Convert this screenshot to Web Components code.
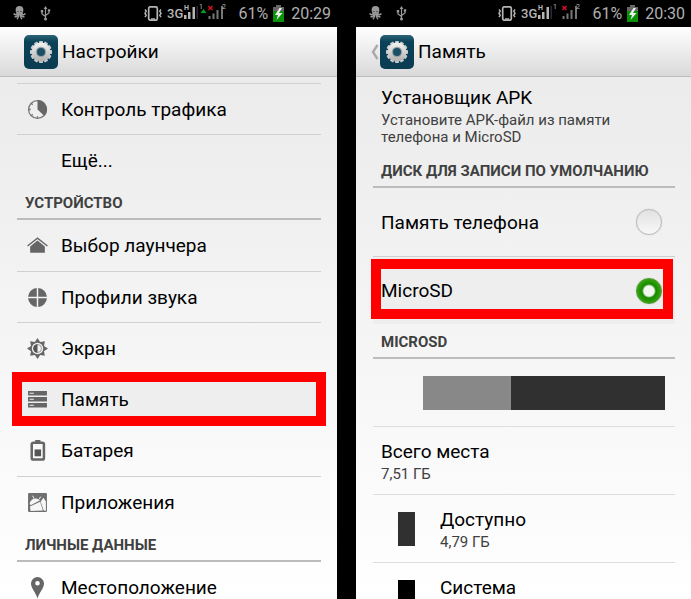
<!DOCTYPE html>
<html lang="ru">
<head>
<meta charset="utf-8">
<meta name="viewport" content="width=device-width, initial-scale=1">
<title>Настройки</title>
<style>
    body {
        margin: 0;
        height: 100vh;
        overflow: hidden;
        background: #000;
        color: #000;
        font-family: Roboto, "Noto Sans", sans-serif;
        font-size: 19px;
        display: grid;
        grid-template-columns: 337fr 335fr;
        grid-template-rows: 100%;
        gap: 19px;
    }
</style>
</head>
<body>
    <phone-screen>
        <status-bar slot="status" time="20:29" charge="61%" upload></status-bar>
        <title-bar slot="title" label="Настройки"></title-bar>
        <menu-item icon="traffic" label="Контроль трафика" divided></menu-item>
        <menu-item label="Ещё..." divided></menu-item>
        <section-title>Устройство</section-title>
        <menu-item icon="home" label="Выбор лаунчера"></menu-item>
        <menu-item icon="sound" label="Профили звука" divided></menu-item>
        <menu-item icon="display" label="Экран" divided></menu-item>
        <menu-item icon="storage" label="Память" marked></menu-item>
        <menu-item icon="battery" label="Батарея"></menu-item>
        <menu-item icon="apps" label="Приложения" divided></menu-item>
        <section-title>Личные данные</section-title>
        <menu-item icon="place" label="Местоположение"></menu-item>
    </phone-screen>

    <phone-screen>
        <status-bar slot="status" time="20:30" charge="61%"></status-bar>
        <title-bar slot="title" label="Память" back></title-bar>
        <info-row label="Установщик APK" compact>Установите APK-файл из памяти телефона и MicroSD</info-row>
        <section-title>Диск для записи по умолчанию</section-title>
        <disk-picker></disk-picker>
        <section-title>MicroSD</section-title>
        <usage-bar></usage-bar>
        <info-row label="Всего места">7,51 ГБ</info-row>
        <info-row label="Доступно" swatch="#303030">4,79 ГБ</info-row>
        <info-row label="Система" swatch="#000"></info-row>
    </phone-screen>

<script>
const ICONS = {
    traffic: `
        <circle cx="10" cy="10" r="8.5" fill="#eee" stroke="#777" stroke-width="1.2"/>
        <path d="M10 1a9 9 0 0 1 6.6 15.1L10 10z" fill="#666"/>
        <path d="M1.5 10h2M10 16.5v2M4 4l1.4 1.4M4 16l1.4-1.4" stroke="#777" stroke-width="1.3"/>`,
    home: `
        <path d="M.5 10.5 10 3l9.500 7.500" fill="none" stroke="#666" stroke-width="1.3"/>
        <path d="M10 5.200 17 11v5.800H3V11z" fill="#666"/>`,
    sound: `
        <path d="M9.300 1v8.300H1A9 9 0 0 1 9.300 1zM10.700 1A9 9 0 0 1 19 9.300h-8.300zM1 10.700h8.300V19A9 9 0 0 1 1 10.700zM10.700 10.700H19A9 9 0 0 1 10.700 19z" fill="#666"/>`,
    display: `
        <path d="M10 0 12.500 3.800 17 3l-.8 4.500L20 10l-3.800 2.500L17 17l-4.500-.8L10 20l-2.500-3.800L3 17l.8-4.500L0 10l3.800-2.500L3 3l4.500.8z" fill="#666"/>
        <circle cx="10" cy="10" r="5.400" fill="#f2f2f2"/>
        <circle cx="10" cy="10" r="3.800" fill="none" stroke="#888" stroke-width=".8"/>
        <path d="M10 6a4 4 0 0 0 0 8z" fill="#555"/>`,
    storage: `
        <path d="M1 2h18v4.200H1zM1 7.700h18v4.200H1zM1 13.400h18v4.200H1z" fill="#666"/>
        <path d="M2.500 3.600h4v1h-4zM2.500 9.300h4v1h-4zM2.500 15h4v1h-4z" fill="#eee"/>`,
    battery: `
        <path d="M7.800 0h5v2.500h-5z" fill="#666"/>
        <rect x="4.500" y="2.600" width="11.600" height="16" rx="1.500" fill="none" stroke="#666" stroke-width="2.400"/>
        <path d="M7.200 9h6.200v6.500H7.200z" fill="#555"/>`,
    apps: `
        <rect x="1" y="1" width="18" height="18" rx="1" fill="#707070"/>
        <path d="M2.500 11C4 6.500 8 4.800 12.500 7.800L3.500 12.500zM6.300 6.200 5 3.800l.6-.4 1.500 2.500zM11.300 6.300l1.400-2 .6.4-1.300 2.200z" fill="#f6f6f6"/>
        <path d="M13 9.200 15.600 5.500 18 9v9l-2.200-.6zM2.800 13.800l9.700-4.600 2.600 8.300L3.400 18z" fill="#f6f6f6"/>`,
    place: `
        <path fill-rule="evenodd" d="M10 0a6.200 6.200 0 0 1 6.200 6.200C16.200 10.500 12 14 10 20.500 8 14 3.800 10.500 3.800 6.200A6.200 6.200 0 0 1 10 0zm0 3.800a2.200 2.200 0 1 0 0 4.400 2.200 2.200 0 0 0 0-4.400z" fill="#666"/>`
};

class PhoneScreen extends HTMLElement {
    constructor() {
        super();
        this.attachShadow({mode: 'open'});
    }

    connectedCallback() {
        this.shadowRoot.innerHTML = `
        <slot name="status"></slot>
        <slot name="title"></slot>
        <main><slot></slot></main>
        <style>
            :host {
                display: flex;
                flex-direction: column;
                min-width: 0;
                overflow: hidden;
                background: linear-gradient(#e9e9e9, #f0f0f0 35%, #fff);
            }
            main {
                flex: 1;
                min-height: 0;
                padding: 6px 16px 0 17px;
            }
        </style>
        `;
    }
}

class StatusBar extends HTMLElement {
    constructor() {
        super();
        this.attachShadow({mode: 'open'});
    }

    connectedCallback() {
        const upload = this.hasAttribute('upload') ? '<path d="m36.500 9 3 4h-6z" fill="#00a020"/>' : '';
        this.shadowRoot.innerHTML = `
        <div class="left">
            <svg width="13" height="14" viewBox="0 0 13 14">
                <circle cx="6.500" cy="4" r="3.900" fill="#999"/>
                <path d="M4.500 6.500C4 9 2 9.300.6 7.600M8.500 6.500C9 9 11 9.300 12.400 7.600M5 7.500C5 10 3.500 11 1.500 10.800M8 7.500c0 2.500 1.500 3.500 3.500 3.300M5.800 8c0 2.500-.5 4-1.800 5.200M7.200 8c0 2.500.5 4 1.800 5.200" fill="none" stroke="#999" stroke-width="1.500"/>
                <path d="M4.500 5h1v1h-1zM7.500 5h1v1h-1z" fill="#222"/>
            </svg>
            <svg width="11" height="15" viewBox="0 0 11 15">
                <path d="M5.500 2v11M5.500 10.500 2 8V5.500M5.500 9.500 9 7V4.500" fill="none" stroke="#999" stroke-width="1.200"/>
                <path d="m5.500 0 1.900 3H3.600zM.8 4h2.400v2.400H.8zM7.800 3.200h2.400v2.400H7.800z" fill="#999"/>
                <circle cx="5.500" cy="13" r="1.500" fill="#999"/>
            </svg>
        </div>
        <svg class="vibrate" width="18" height="15" viewBox="0 0 18 15" fill="none" stroke="#b5b5b5">
            <rect x="4.700" y=".8" width="8.600" height="13.400" rx="1.600" stroke-width="1.700"/>
            <path d="M7 13h4" stroke-width="1.500"/>
            <path d="m1 3.500 1.200 1.600L1 7.500l1.200 1.800L1 11.200M17 3.500l-1.200 1.600L17 7.500l-1.200 1.800 1.200 1.900" stroke-width="1.500"/>
        </svg>
        <svg class="signal" width="59" height="27" viewBox="0 0 59 27" fill="#b5b5b5">
            <text x="0" y="18" font-size="13" font-weight="500">3G</text>
            <text x="17" y="10" font-size="7" font-weight="700">H</text>
            <path d="M17 15h2.500v4H17zM21 12h2.500v7H21zM25.500 7h2.500v12h-2.500z"/>
            <path d="M29.500 6h1.500v13h-1.500z" fill="#302635"/>
            <text x="32" y="9" font-size="7">1</text>
            ${upload}
            <path d="m41.500 6 4 4m0-4-4 4" stroke="#e01020" stroke-width="1.400"/>
            <path d="M41.500 16h2v3h-2zM45.500 13.500h2V19h-2zM49.500 10h2v9h-2zM54 6h2v13h-2z" fill="#777"/>
            <text x="55" y="9" font-size="7">2</text>
        </svg>
        <span class="charge">${this.getAttribute('charge')}</span>
        <svg class="cell" width="11" height="17" viewBox="0 0 11 17">
            <path d="M3 0h5v2h3v15H0V2h3z" fill="#666"/>
            <path d="M0 6h11v11H0z" fill="#079207"/>
            <path d="M6.500 3 2 10h3l-1.500 5L9.500 8H6l3-5z" fill="#eee"/>
        </svg>
        <time>${this.getAttribute('time')}</time>
        <style>
            :host {
                display: flex;
                align-items: center;
                height: 27px;
                padding: 0 6px 0 13px;
                background: #000;
                color: #b0b0b0;
                font-size: 16px;
            }
            .left {
                display: flex;
                flex: 1;
                gap: 14px;
            }
            .vibrate { margin-right: 5px; }
            .signal { margin-right: 12px; }
            .cell { margin: 0 7px 0 5px; }
        </style>
        `;
    }
}

class TitleBar extends HTMLElement {
    constructor() {
        super();
        this.attachShadow({mode: 'open'});
    }

    connectedCallback() {
        const teeth = Array.from({length: 12}, (_, i) =>
            `<path d="M-1.700-11h3.400l.6 3h-4.600z" transform="rotate(${i * 30})"/>`).join('');
        const back = this.hasAttribute('back') ? `
            <button aria-label="Назад">
                <svg width="8" height="16" viewBox="0 0 8 16"><path d="M6.500 1 2 8l4.500 7" fill="none" stroke="#aaa" stroke-width="2.400"/></svg>
            </button>` : '';
        this.shadowRoot.innerHTML = `
        <div class="back">${back}</div>
        <svg class="logo" width="34" height="34" viewBox="0 0 34 34">
            <defs>
                <linearGradient id="tile" x2="0" y2="1"><stop stop-color="#2b6378"/><stop offset=".2" stop-color="#0b4259"/><stop offset="1" stop-color="#0a3c52"/></linearGradient>
                <linearGradient id="metal" x2="0" y2="1"><stop stop-color="#f4f4f4"/><stop offset="1" stop-color="#b0b0b0"/></linearGradient>
            </defs>
            <rect width="34" height="34" rx="5" fill="url(#tile)"/>
            <g transform="translate(17 17)" fill="#ccc">
                ${teeth}
                <circle r="9.400" fill="url(#metal)"/>
                <circle r="5.200" fill="#9aa2a6"/>
                <circle r="4" fill="#1a4f66"/>
            </g>
        </svg>
        <h1>${this.getAttribute('label')}</h1>
        <style>
            :host {
                display: flex;
                align-items: center;
                height: 49px;
                border-bottom: 1px solid #bdbdbd;
                background: linear-gradient(#fff, #d9d9d9);
            }
            .back {
                display: flex;
                justify-content: flex-end;
                width: 24px;
            }
            button {
                display: flex;
                padding: 0 1px 0 0;
                border: 0;
                background: none;
            }
            h1 {
                margin: 0 0 0 4px;
                font-size: 19px;
                font-weight: 400;
            }
        </style>
        `;
    }
}

class SectionTitle extends HTMLElement {
    constructor() {
        super();
        this.attachShadow({mode: 'open'});
    }

    connectedCallback() {
        this.shadowRoot.innerHTML = `
        <h2><slot></slot></h2>
        <style>
            :host { display: block; }
            h2 {
                box-sizing: border-box;
                height: 35px;
                margin: 0;
                padding: 9px 8px 0;
                border-bottom: 2px solid #bcbcbc;
                color: #404040;
                font-size: 15px;
                font-weight: 700;
                line-height: 18px;
                text-transform: uppercase;
                white-space: nowrap;
            }
        </style>
        `;
    }
}

class MenuItem extends HTMLElement {
    constructor() {
        super();
        this.attachShadow({mode: 'open'});
    }

    connectedCallback() {
        const icon = this.getAttribute('icon');
        this.shadowRoot.innerHTML = `
        <a href="#${icon || 'more'}">
            <svg width="21" height="21" viewBox="0 0 20 20" overflow="visible">${ICONS[icon] || ''}</svg>
            <span>${this.getAttribute('label')}</span>
        </a>
        <style>
            :host {
                display: block;
                box-sizing: border-box;
                height: 51px;
                position: relative;
            }
            :host([divided]) { border-top: 1px solid #d0d0d0; }
            :host([marked]) {
                height: 52px;
                background: #eee;
                z-index: 1;
            }
            :host([marked])::after {
                content: "";
                position: absolute;
                inset: -1px -5px;
                border: 10px solid #f00;
                pointer-events: none;
            }
            a {
                display: flex;
                align-items: center;
                gap: 13px;
                height: 100%;
                padding-left: 10px;
                color: inherit;
                text-decoration: none;
            }
        </style>
        `;
    }
}

class InfoRow extends HTMLElement {
    constructor() {
        super();
        this.attachShadow({mode: 'open'});
    }

    connectedCallback() {
        const swatch = this.getAttribute('swatch');
        this.shadowRoot.innerHTML = `
        ${swatch ? `<i style="background:${swatch}"></i>` : ''}
        <div>
            <h3>${this.getAttribute('label')}</h3>
            <p><slot></slot></p>
        </div>
        <style>
            :host {
                display: flex;
                box-sizing: border-box;
                height: 68px;
                padding: 13px 8px 0;
                border-top: 1px solid #ddd;
            }
            :host([compact]) {
                height: 70px;
                border: 0;
                padding-top: 3px;
            }
            i {
                width: 17px;
                height: 34px;
                margin: 4px 25px 0 17px;
            }
            h3, p {
                margin: 0;
                font-weight: 400;
            }
            h3 {
                font-size: 19px;
                line-height: 24px;
            }
            p {
                max-width: 240px;
                padding-top: 2px;
                color: #404040;
                font-size: 15px;
                line-height: 17px;
            }
        </style>
        `;
    }
}

class DiskPicker extends HTMLElement {
    constructor() {
        super();
        this.attachShadow({mode: 'open'});
    }

    connectedCallback() {
        this.shadowRoot.innerHTML = `
        <label>Память телефона<input type="radio" name="disk" value="phone"></label>
        <label class="marked">MicroSD<input type="radio" name="disk" value="sd" checked></label>
        <style>
            :host { display: block; }
            label {
                display: flex;
                align-items: center;
                justify-content: space-between;
                box-sizing: border-box;
                height: 68px;
                padding: 0 13px 0 8px;
                position: relative;
            }
            .marked {
                border-top: 1px solid #d0d0d0;
                background: #eee;
            }
            .marked::after {
                content: "";
                position: absolute;
                inset: 2px 2px 5px -2px;
                border: 10px solid #f00;
                pointer-events: none;
            }
            input {
                appearance: none;
                box-sizing: border-box;
                width: 26px;
                height: 26px;
                margin: 0;
                border: 1px solid #bbb;
                border-radius: 50%;
                background: linear-gradient(#e2e2e2, #f8f8f8);
                box-shadow: 0 0 1px #aaa;
            }
            input:checked {
                border-color: #4a9a2c;
                background: radial-gradient(circle, #f2f8ef 5px, #168a00 7px, #35a40d 12px);
            }
        </style>
        `;
    }
}

class UsageBar extends HTMLElement {
    constructor() {
        super();
        this.attachShadow({mode: 'open'});
    }

    connectedCallback() {
        this.shadowRoot.innerHTML = `
        <div class="used"></div>
        <div class="free"></div>
        <style>
            :host {
                display: flex;
                height: 34px;
                padding: 17px 10px 16px 50px;
            }
            .used { flex: 88; background: #888; }
            .free { flex: 155; background: #303030; }
        </style>
        `;
    }
}

customElements.define('phone-screen', PhoneScreen);
customElements.define('status-bar', StatusBar);
customElements.define('title-bar', TitleBar);
customElements.define('section-title', SectionTitle);
customElements.define('menu-item', MenuItem);
customElements.define('info-row', InfoRow);
customElements.define('disk-picker', DiskPicker);
customElements.define('usage-bar', UsageBar);
</script>
</body>
</html>
